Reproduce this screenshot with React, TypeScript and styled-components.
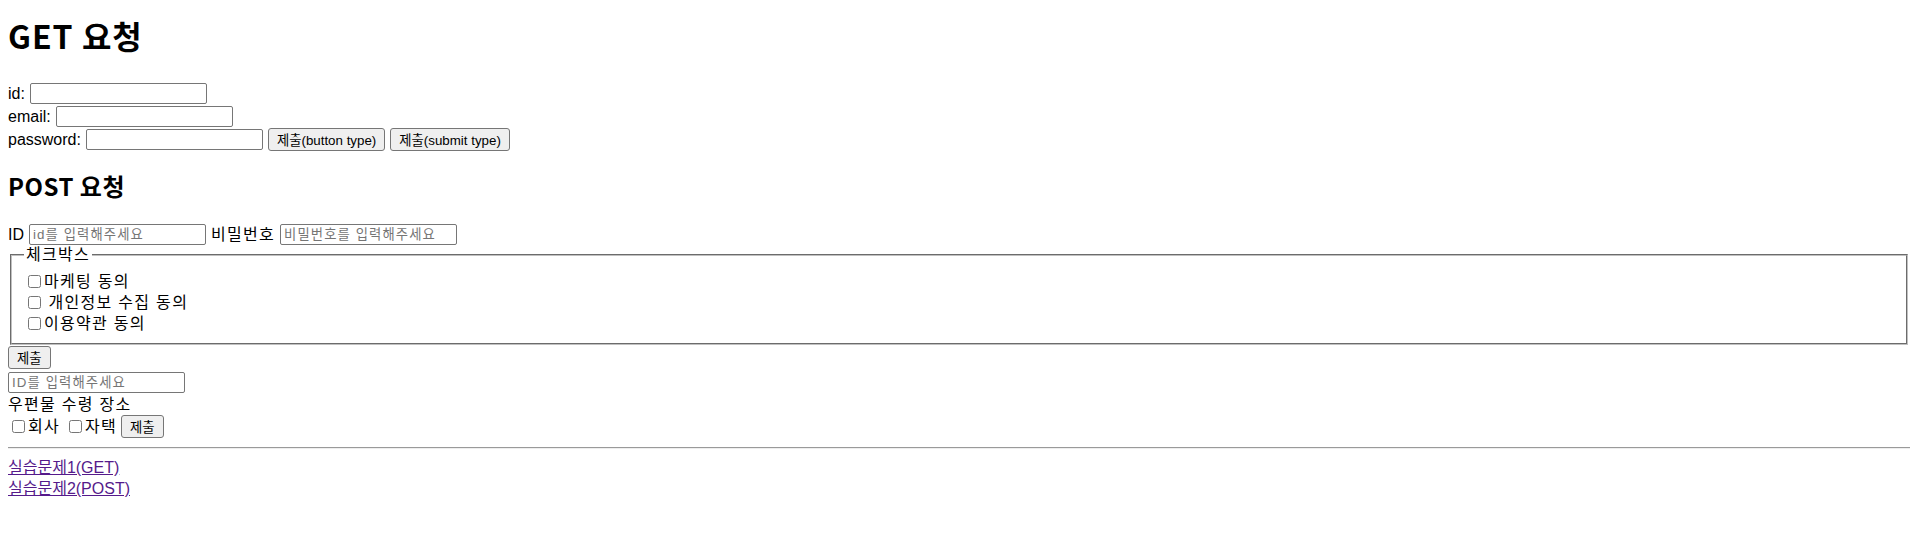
import styled, { createGlobalStyle } from 'styled-components'

const GlobalStyle = createGlobalStyle`
  body {
    margin: 0;
    font-family: "Liberation Sans", "Noto Sans CJK KR", sans-serif;
    font-size: 16px;
    line-height: 21px;
    color: #000;
    background: #fff;
  }
`

const Page = styled.div`
  padding: 0 8px;
`

const Heading = styled.h1`
  margin: 14px 0 25.5px;
  font-family: "Noto Sans CJK KR", sans-serif;
  font-size: 32px;
  line-height: 42px;
  font-weight: bold;
  letter-spacing: 1px;
`

const SubHeading = styled.h2`
  margin: 19.2px 0 21.3px;
  font-family: "Noto Sans CJK KR", sans-serif;
  font-size: 24px;
  line-height: 32px;
  font-weight: bold;
  letter-spacing: 0.5px;
`

const Form = styled.form`
  margin: 0;
`

const Row = styled.div<{ $h?: number; $gap?: number; $top?: number }>`
  display: flex;
  align-items: center;
  height: ${(p) => p.$h ?? 23}px;
  gap: ${(p) => p.$gap ?? 5}px;
  margin-top: ${(p) => p.$top ?? 0}px;
  white-space: nowrap;
`

// korean runs are set a bit wider, like the original's hangul face
const Hangul = styled.span<{ $lead?: boolean }>`
  letter-spacing: 1.3px;
  margin-left: ${(p) => (p.$lead ? '4.5px' : '0')};
`

const Field = styled.input`
  box-sizing: border-box;
  width: 177px;
  height: 21px;
  margin: 0;
  padding: 1px 3px;
  border: 1px solid #767676;
  border-radius: 2px;
  font-family: "Liberation Sans", "Noto Sans CJK KR", sans-serif;
  font-size: 13.333px;
  &::placeholder {
    color: #757575;
    letter-spacing: 1.1px;
  }
`

const Button = styled.button`
  box-sizing: border-box;
  height: 23px;
  margin: 0;
  padding: 0 8px;
  border: 1px solid #767676;
  border-radius: 3px;
  background: #efefef;
  font-family: "Liberation Sans", "Noto Sans CJK KR", sans-serif;
  font-size: 13.333px;
  color: #000;
`

const Choice = styled.label<{ $after?: number }>`
  display: flex;
  align-items: center;
  margin-right: ${(p) => p.$after ?? 0}px;
`

const Check = styled.input.attrs({ type: 'checkbox' })`
  width: 13px;
  height: 13px;
  margin: 3px 3px 3px 4px;
`

const Box = styled.fieldset`
  margin: 0 2px;
  padding: 7px 12px 9px;
  border: 2px groove #c0c0c0;
`

const Legend = styled.legend`
  padding: 0 2px;
  line-height: 18px;
`

const Rule = styled.hr`
  margin: 8px 0;
  border: 0;
  border-top: 1px solid #9a9a9a;
  border-bottom: 1px solid #eeeeee;
`

const LinkList = styled.nav`
  display: flex;
  flex-direction: column;
  align-items: flex-start;
  line-height: 21px;
`

const Link = styled.a`
  color: #551a8b;
  text-decoration: underline;
`

export default function App() {
  return (
    <Page>
      <GlobalStyle />
      <Heading>GET 요청</Heading>
      <Form>
        <Row>
          <label htmlFor="get-id">id:</label>
          <Field id="get-id" type="text" />
        </Row>
        <Row>
          <label htmlFor="get-email">email:</label>
          <Field id="get-email" type="text" />
        </Row>
        <Row>
          <label htmlFor="get-pw">password:</label>
          <Field id="get-pw" type="password" />
          <Button type="button">제출(button type)</Button>
          <Button type="submit">제출(submit type)</Button>
        </Row>
      </Form>

      <SubHeading>POST 요청</SubHeading>
      <Form>
        <Row>
          <label htmlFor="post-id">ID</label>
          <Field id="post-id" type="text" placeholder="id를 입력해주세요" />
          <label htmlFor="post-pw"><Hangul>비밀번호</Hangul></label>
          <Field id="post-pw" type="password" placeholder="비밀번호를 입력해주세요" />
        </Row>
        <Box>
          <Legend><Hangul>체크박스</Hangul></Legend>
          <Row $h={21} $gap={0}>
            <Choice><Check /><Hangul>마케팅 동의</Hangul></Choice>
          </Row>
          <Row $h={21} $gap={0}>
            <Choice><Check /><Hangul $lead>개인정보 수집 동의</Hangul></Choice>
          </Row>
          <Row $h={21} $gap={0}>
            <Choice><Check /><Hangul>이용약관 동의</Hangul></Choice>
          </Row>
        </Box>
        <Row $top={1.5}>
          <Button type="submit">제출</Button>
        </Row>
      </Form>

      <Form>
        <Row $top={1.5}>
          <Field type="text" placeholder="ID를 입력해주세요" />
        </Row>
        <Row $h={21}><Hangul>우편물 수령 장소</Hangul></Row>
        <Row $h={24} $gap={0}>
          <Choice $after={5}><Check /><Hangul>회사</Hangul></Choice>
          <Choice $after={4}><Check /><Hangul>자택</Hangul></Choice>
          <Button type="submit">제출</Button>
        </Row>
      </Form>

      <Rule />
      <LinkList>
        <Link href="#">실습문제1(GET)</Link>
        <Link href="#">실습문제2(POST)</Link>
      </LinkList>
    </Page>
  )
}
